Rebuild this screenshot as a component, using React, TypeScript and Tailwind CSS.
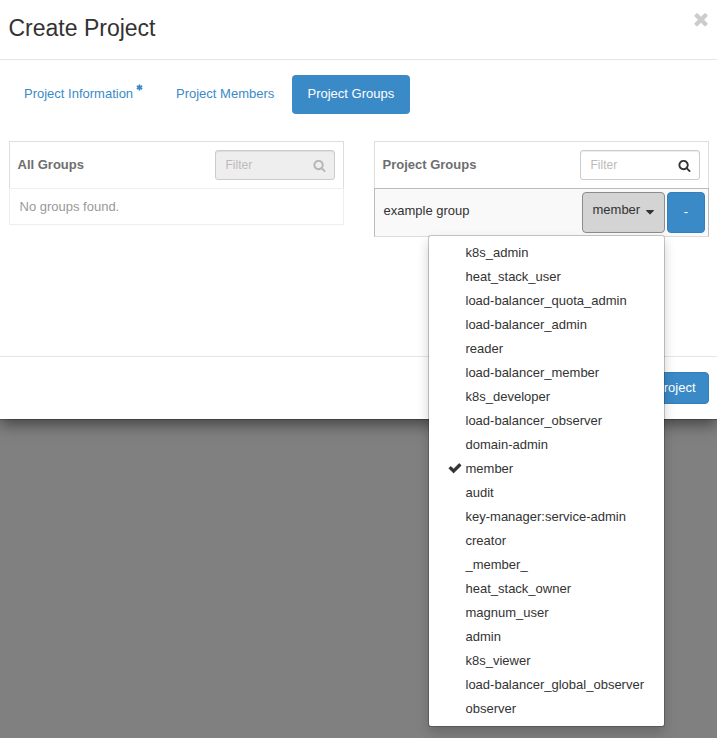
import React from "react";

const PATHS = {
  times:
    "M1490 1322q0 40-28 68l-136 136q-28 28-68 28t-68-28l-294-294-294 294q-28 28-68 28t-68-28l-136-136q-28-28-28-68t28-68l294-294-294-294q-28-28-28-68t28-68l136-136q28-28 68-28t68 28l294 294 294-294q28-28 68-28t68 28l136 136q28 28 28 68t-28 68l-294 294 294 294q28 28 28 68z",
  search:
    "M1216 832q0-185-131.5-316.5t-316.5-131.5-316.5 131.5-131.5 316.5 131.5 316.5 316.5 131.5 316.5-131.5 131.5-316.5zm512 832q0 52-38 90t-90 38q-54 0-90-38l-343-342q-179 124-399 124-143 0-273.5-55.5t-225-150-150-225-55.5-273.5 55.5-273.5 150-225 225-150 273.5-55.5 273.5 55.5 225 150 150 225 55.5 273.5q0 220-124 399l343 343q37 37 37 90z",
  check:
    "M1671 566q0 40-28 68l-724 724-136 136q-28 28-68 28t-68-28l-136-136-362-362q-28-28-28-68t28-68l136-136q28-28 68-28t68 28l294 295 656-657q28-28 68-28t68 28l136 136q28 28 28 68z",
  asterisk:
    "M1546 1050q46 26 59.5 77.5t-12.5 97.5l-64 110q-26 46-77.5 59.5t-97.5-12.5l-266-153v307q0 52-38 90t-90 38h-128q-52 0-90-38t-38-90v-307l-266 153q-46 26-97.5 12.5t-77.5-59.5l-64-110q-26-46-12.5-97.5t59.5-77.5l266-154-266-154q-46-26-59.5-77.5t12.5-97.5l64-110q26-46 77.5-59.5t97.5 12.5l266 153v-307q0-52 38-90t90-38h128q52 0 90 38t38 90v307l266-153q46-26 97.5-12.5t77.5 59.5l64 110q26 46 12.5 97.5t-59.5 77.5l-266 154z",
  caret:
    "M1408 704q0 26-19 45l-448 448q-19 19-45 19t-45-19l-448-448q-19-19-19-45t19-45 45-19h896q26 0 45 19t19 45z",
};

function Icon({ name, className }: { name: keyof typeof PATHS; className: string }) {
  return (
    <svg
      viewBox="0 0 1792 1792"
      fill="currentColor"
      stroke="currentColor"
      strokeWidth={name === "check" || name === "asterisk" ? 60 : 0}
      aria-hidden="true"
      className={className}
    >
      <path d={PATHS[name]} />
    </svg>
  );
}

const ROLES = [
  "k8s_admin",
  "heat_stack_user",
  "load-balancer_quota_admin",
  "load-balancer_admin",
  "reader",
  "load-balancer_member",
  "k8s_developer",
  "load-balancer_observer",
  "domain-admin",
  "member",
  "audit",
  "key-manager:service-admin",
  "creator",
  "_member_",
  "heat_stack_owner",
  "magnum_user",
  "admin",
  "k8s_viewer",
  "load-balancer_global_observer",
  "observer",
];

function Filter({ disabled }: { disabled?: boolean }) {
  return (
    <div
      className={`flex h-[30px] w-[120px] items-center justify-between rounded-[3px] border border-[#ccc] pr-2 pl-[9.5px] shadow-[inset_0_1px_1px_rgba(0,0,0,0.075)] ${
        disabled ? "bg-[#eee]" : "bg-white"
      }`}
    >
      <input
        placeholder="Filter"
        disabled={disabled}
        className="w-16 bg-transparent text-[12px] leading-[18px] outline-none placeholder:text-[#bbb]"
      />
      <Icon
        name="search"
        className={`mt-px size-[13px] shrink-0 ${disabled ? "text-[#b5b5b5]" : "text-[#333]"}`}
      />
    </div>
  );
}

function PanelHeader({ title, disabled }: { title: string; disabled?: boolean }) {
  return (
    <div className="flex h-[47px] items-center justify-between border border-b-0 border-[#ddd] pr-2 pl-[7.5px]">
      <h4 className="font-bold text-[#6e6e6e]">{title}</h4>
      <Filter disabled={disabled} />
    </div>
  );
}

function RoleMenu() {
  return (
    <ul className="absolute top-[43px] right-0 z-10 w-[237px] rounded-[3px] border border-black/20 bg-white bg-clip-padding py-[5px] shadow-[0_6px_12px_rgba(0,0,0,0.175)]">
      {ROLES.map((role) => (
        <li key={role} className="flex h-6 items-center pl-[19px] text-[#333]">
          <span className="w-[17.5px]">
            {role === "member" && <Icon name="check" className="mb-[2px] size-[14px]" />}
          </span>
          {role}
        </li>
      ))}
    </ul>
  );
}

export default function App() {
  return (
    <div className="h-[738px] w-[717px] overflow-hidden bg-[#808080] font-['Liberation_Sans',Arial,sans-serif] text-[13px] leading-[18px] text-[#333]">
      <div className="flex h-[419px] flex-col bg-white shadow-[0_0_0_1px_rgba(0,0,0,0.2),0_5px_15px_rgba(0,0,0,0.5)]">
        <header className="flex h-[60px] items-start justify-between border-b border-[#e5e5e5] pr-[6px] pl-[8.5px]">
          <h3 className="mt-[15px] text-[23px] leading-[26px]">Create Project</h3>
          <button className="mt-[9px] text-[#ccc]">
            <Icon name="times" className="size-5" />
          </button>
        </header>

        <main className="flex-1 pt-[15px] pr-2 pl-[9px]">
          <nav className="flex h-[39px] gap-[2px] text-[#3b8ac8]">
            <a className="flex w-[150px] items-center pb-[2px] pl-[15px]">
              Project Information
              <Icon name="asterisk" className="mb-3 ml-[3px] size-[7px]" />
            </a>
            <a className="flex w-[129px] items-center pb-[2px] pl-[15px]">Project Members</a>
            <a className="flex w-[118px] items-center rounded-[4px] bg-[#3b8ac8] pb-[2px] pl-[15.5px] text-white">
              Project Groups
            </a>
          </nav>

          <div className="mt-[27px] grid grid-cols-2 gap-[30px]">
            <section>
              <PanelHeader title="All Groups" disabled />
              <p className="h-[37px] border border-[#eee] pt-[9px] pl-[9.5px] text-[#999]">
                No groups found.
              </p>
            </section>

            <section>
              <PanelHeader title="Project Groups" />
              <div className="flex h-[49px] items-start border border-[#bbb] border-b-[#ddd] bg-[#f9f9f9] pt-[3px] pr-[3px] pl-[8.5px]">
                <span className="mt-[10px] flex-1">example group</span>
                <div className="relative mr-[2px]">
                  <button className="flex h-[41px] w-[83px] items-start rounded-[4px] border border-[#8c8c8c] bg-[#d4d4d4] pt-2 pl-[9.5px]">
                    member
                    <Icon name="caret" className="mt-[4px] ml-[3px] size-[14px]" />
                  </button>
                  <RoleMenu />
                </div>
                <button className="h-[41px] w-[38px] rounded-[4px] border border-[#347fbb] bg-[#3b8ac8] pb-px text-white">
                  -
                </button>
              </div>
            </section>
          </div>
        </main>

        <footer className="flex h-[63px] items-start justify-end border-t border-[#e5e5e5] pt-[15px] pr-2">
          <button className="h-8 rounded-[4px] border border-[#347fbb] bg-[#3b8ac8] px-[12.5px] text-white">
            Create Project
          </button>
        </footer>
      </div>
    </div>
  );
}
